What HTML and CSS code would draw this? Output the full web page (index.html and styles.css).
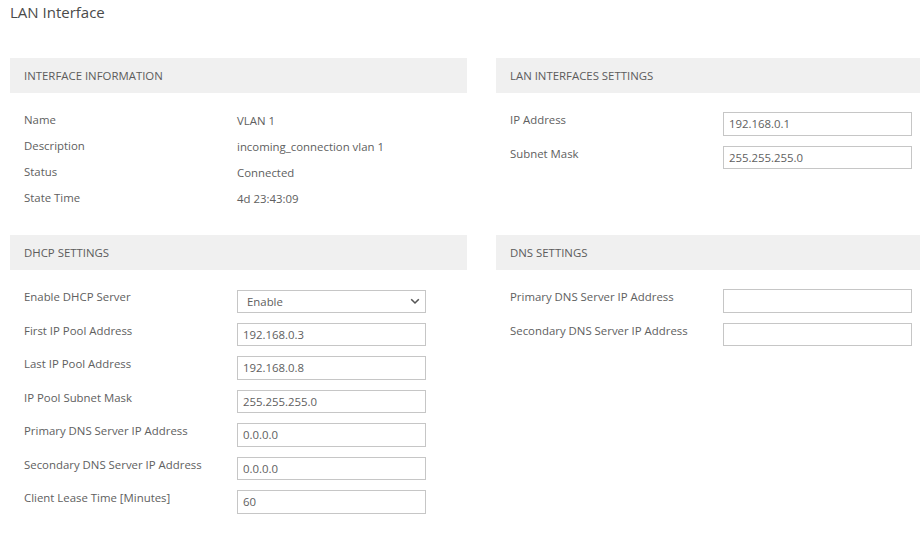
FILE: index.html
```html
<!DOCTYPE html>
<html>
<head>
<meta charset="utf-8">
<link rel="stylesheet" href="styles.css">
</head>
<body>
<h1 class="page-title">LAN Interface</h1>
<div class="grid">
  <section class="panel">
    <div class="panel-head">INTERFACE INFORMATION</div>
    <div class="info-body">
      <div class="info-row"><span class="lbl">Name</span><span class="val">VLAN 1</span></div>
      <div class="info-row"><span class="lbl">Description</span><span class="val">incoming_connection vlan 1</span></div>
      <div class="info-row"><span class="lbl">Status</span><span class="val">Connected</span></div>
      <div class="info-row"><span class="lbl">State Time</span><span class="val">4d 23:43:09</span></div>
    </div>
  </section>
  <section class="panel">
    <div class="panel-head">LAN INTERFACES SETTINGS</div>
    <div class="form-body">
      <div class="form-row"><label class="lbl">IP Address</label><input class="field" type="text" value="192.168.0.1"></div>
      <div class="form-row"><label class="lbl">Subnet Mask</label><input class="field" type="text" value="255.255.255.0"></div>
    </div>
  </section>
  <section class="panel">
    <div class="panel-head">DHCP SETTINGS</div>
    <div class="form-body">
      <div class="form-row"><label class="lbl">Enable DHCP Server</label>
        <div class="select-wrap">
          <select class="field select"><option>Enable</option><option>Disable</option></select>
          <svg class="chev" width="10" height="7" viewBox="0 0 10 7"><path d="M1.2 1.3 L5 5 L8.8 1.3" fill="none" stroke="#555" stroke-width="1.6"/></svg>
        </div>
      </div>
      <div class="form-row"><label class="lbl">First IP Pool Address</label><input class="field" type="text" value="192.168.0.3"></div>
      <div class="form-row"><label class="lbl">Last IP Pool Address</label><input class="field" type="text" value="192.168.0.8"></div>
      <div class="form-row"><label class="lbl">IP Pool Subnet Mask</label><input class="field" type="text" value="255.255.255.0"></div>
      <div class="form-row"><label class="lbl">Primary DNS Server IP Address</label><input class="field" type="text" value="0.0.0.0"></div>
      <div class="form-row"><label class="lbl">Secondary DNS Server IP Address</label><input class="field" type="text" value="0.0.0.0"></div>
      <div class="form-row"><label class="lbl">Client Lease Time [Minutes]</label><input class="field" type="text" value="60"></div>
    </div>
  </section>
  <section class="panel">
    <div class="panel-head">DNS SETTINGS</div>
    <div class="form-body">
      <div class="form-row"><label class="lbl">Primary DNS Server IP Address</label><input class="field" type="text" value=""></div>
      <div class="form-row"><label class="lbl">Secondary DNS Server IP Address</label><input class="field" type="text" value=""></div>
    </div>
  </section>
</div>
</body>
</html>
```
FILE: styles.css
```css
html, body {
  margin: 0;
  padding: 0;
  background: #ffffff;
  font-family: "Open Sans", "Liberation Sans", sans-serif;
  color: #606060;
}
.page-title {
  margin: 0;
  padding: 2px 0 0 10px;
  height: 58px;
  box-sizing: border-box;
  font-size: 15px;
  line-height: 20px;
  font-weight: 400;
  color: #4a4a4a;
}
.grid {
  display: grid;
  grid-template-columns: 457px 424px;
  column-gap: 29px;
  row-gap: 24px;
  padding-left: 10px;
  align-items: start;
}
.panel-head {
  height: 35px;
  line-height: 35px;
  background: #f0f0f0;
  padding-left: 14px;
  font-size: 11.4px;
  color: #5c5c5c;
}
.info-body {
  padding-top: 14px;
}
.info-row {
  display: flex;
  height: 26px;
  align-items: center;
  font-size: 11.4px;
}
.lbl {
  width: 213px;
  padding-left: 14px;
  flex: none;
  font-size: 11.4px;
  line-height: 16px;
  color: #606060;
}
.val {
  color: #606060;
}
.form-body {
  padding-top: 19px;
  display: flex;
  flex-direction: column;
  gap: 10px;
}
.form-row {
  display: flex;
  align-items: flex-start;
  height: 23.5px;
}
.field {
  width: 189px;
  height: 23.5px;
  box-sizing: border-box;
  border: 1px solid #c6c6c6;
  border-radius: 0;
  padding: 0 5px;
  margin: 0;
  font-family: "Open Sans", "Liberation Sans", sans-serif;
  font-size: 11.4px;
  color: #606060;
  background: #ffffff;
  outline: none;
}
.select-wrap {
  position: relative;
  width: 189px;
  height: 23.5px;
}
.select {
  -webkit-appearance: none;
  appearance: none;
  padding-left: 9px;
}
.chev {
  position: absolute;
  right: 6px;
  top: 9px;
  pointer-events: none;
}
```
